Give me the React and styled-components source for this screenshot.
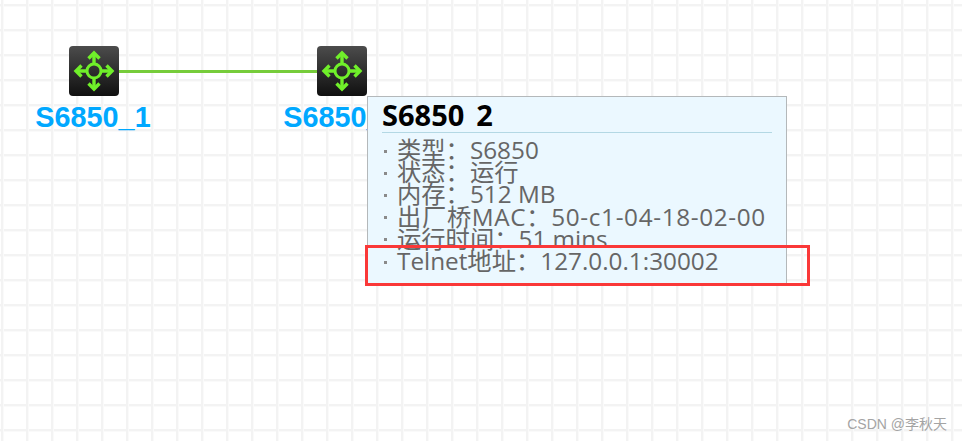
import React from 'react';
import styled, { createGlobalStyle } from 'styled-components';

const FONT = '"Open Sans", "Noto Sans CJK SC", sans-serif';

const rows = [
  { text: '类型：S6850' },
  { text: '状态：运行' },
  { text: '内存：512 MB' },
  { text: '出厂桥MAC：50-c1-04-18-02-00', spacing: 0.65 },
  { text: '运行时间：51 mins' },
  { text: 'Telnet地址：127.0.0.1:30002' },
];

function RouterIcon() {
  return (
    <svg width="50" height="50" viewBox="0 0 50 50" fill="none">
      <circle cx="25" cy="25" r="7" stroke="#70f02a" strokeWidth="3" />
      <g stroke="#70f02a" strokeWidth="3.4" strokeLinecap="butt" strokeLinejoin="miter">
        <path d="M25 18V8M25 32V42M18 25H8M32 25H42" />
        <path d="M19.5 12.5L25 7L30.5 12.5" />
        <path d="M19.5 37.5L25 43L30.5 37.5" />
        <path d="M12.5 19.5L7 25L12.5 30.5" />
        <path d="M37.5 19.5L43 25L37.5 30.5" />
      </g>
    </svg>
  );
}

function Node({ name }) {
  return (
    <NodeBox>
      <NodeIcon><RouterIcon /></NodeIcon>
      <NodeLabel>{name}</NodeLabel>
    </NodeBox>
  );
}

export default function App() {
  return (
    <>
      <GlobalStyle />
      <Canvas>
        <Topology>
          <Node name="S6850_1" />
          <Link />
          <Node name="S6850_2" />
        </Topology>
        <Tooltip>
          <Title><TitleText>S6850_2</TitleText></Title>
          <Rows>
            {rows.map((row) => (
              <Row key={row.text} $spacing={row.spacing}>{row.text}</Row>
            ))}
          </Rows>
        </Tooltip>
        <Highlight />
        <Watermark>CSDN @李秋天</Watermark>
      </Canvas>
    </>
  );
}

const GlobalStyle = createGlobalStyle`
  html, body {
    margin: 0;
    padding: 0;
    background: #fff;
  }
`;

const Canvas = styled.div`
  position: relative;
  width: 962px;
  height: 441px;
  overflow: hidden;
  background-color: #fff;
  background-image:
    linear-gradient(to right, #f3f3f3 2px, #fafafa 2px, #fafafa 3px, transparent 3px),
    linear-gradient(to bottom, #f3f3f3 2px, #fafafa 2px, #fafafa 3px, transparent 3px);
  background-size: 25px 25px;
  background-position: 1px 4px;
`;

const Topology = styled.div`
  display: flex;
  align-items: flex-start;
  padding: 46px 0 0 69px;
`;

const Link = styled.div`
  width: 198px;
  height: 3px;
  margin-top: 24px;
  background: #76cc3a;
`;

const NodeBox = styled.div`
  width: 50px;
  display: flex;
  flex-direction: column;
  align-items: center;
  gap: 4px;
`;

const NodeIcon = styled.div`
  width: 50px;
  height: 50px;
  border-radius: 4px;
  background: linear-gradient(to bottom, #4c4c4c, #101010);
  display: flex;
`;

const NodeLabel = styled.div`
  flex: none;
  margin-right: 2px;
  font-family: "Liberation Sans", Arial, sans-serif;
  font-size: 28.8px;
  font-weight: 700;
  line-height: 34px;
  color: #00a8ff;
  white-space: nowrap;
`;

const Tooltip = styled.div`
  position: absolute;
  left: 367px;
  top: 96px;
  width: 420px;
  height: 189px;
  box-sizing: border-box;
  border: 1px solid #b4b8ba;
  background: #ebf8ff;
  padding: 0 14px;
  font-family: ${FONT};
`;

const Title = styled.div`
  height: 35px;
  border-bottom: 1px solid #b3d8e4;
`;

const TitleText = styled.div`
  height: 30px;
  overflow: hidden;
  font-size: 29px;
  font-weight: 700;
  line-height: 36px;
  color: #000;
  white-space: nowrap;
`;

const Rows = styled.ul`
  list-style: none;
  margin: 6px 0 0;
  padding: 0;
`;

const Row = styled.li`
  height: 22.2px;
  line-height: 22.2px;
  font-size: 24.3px;
  letter-spacing: ${(p) => p.$spacing || 0}px;
  color: #666;
  white-space: nowrap;
  display: flex;
  align-items: center;

  &::before {
    content: '';
    flex: none;
    width: 3px;
    height: 3px;
    margin: 2px 10px 0 2px;
    background: #8a8a8a;
  }
`;

const Highlight = styled.div`
  position: absolute;
  left: 365px;
  top: 245px;
  width: 445px;
  height: 41px;
  box-sizing: border-box;
  border: 3px solid #fa3838;
`;

const Watermark = styled.div`
  position: absolute;
  right: 15px;
  top: 415px;
  font-family: "Liberation Sans", "Noto Sans CJK SC", sans-serif;
  font-size: 14px;
  line-height: 18px;
  color: #a4a4a4;
  white-space: nowrap;
`;
